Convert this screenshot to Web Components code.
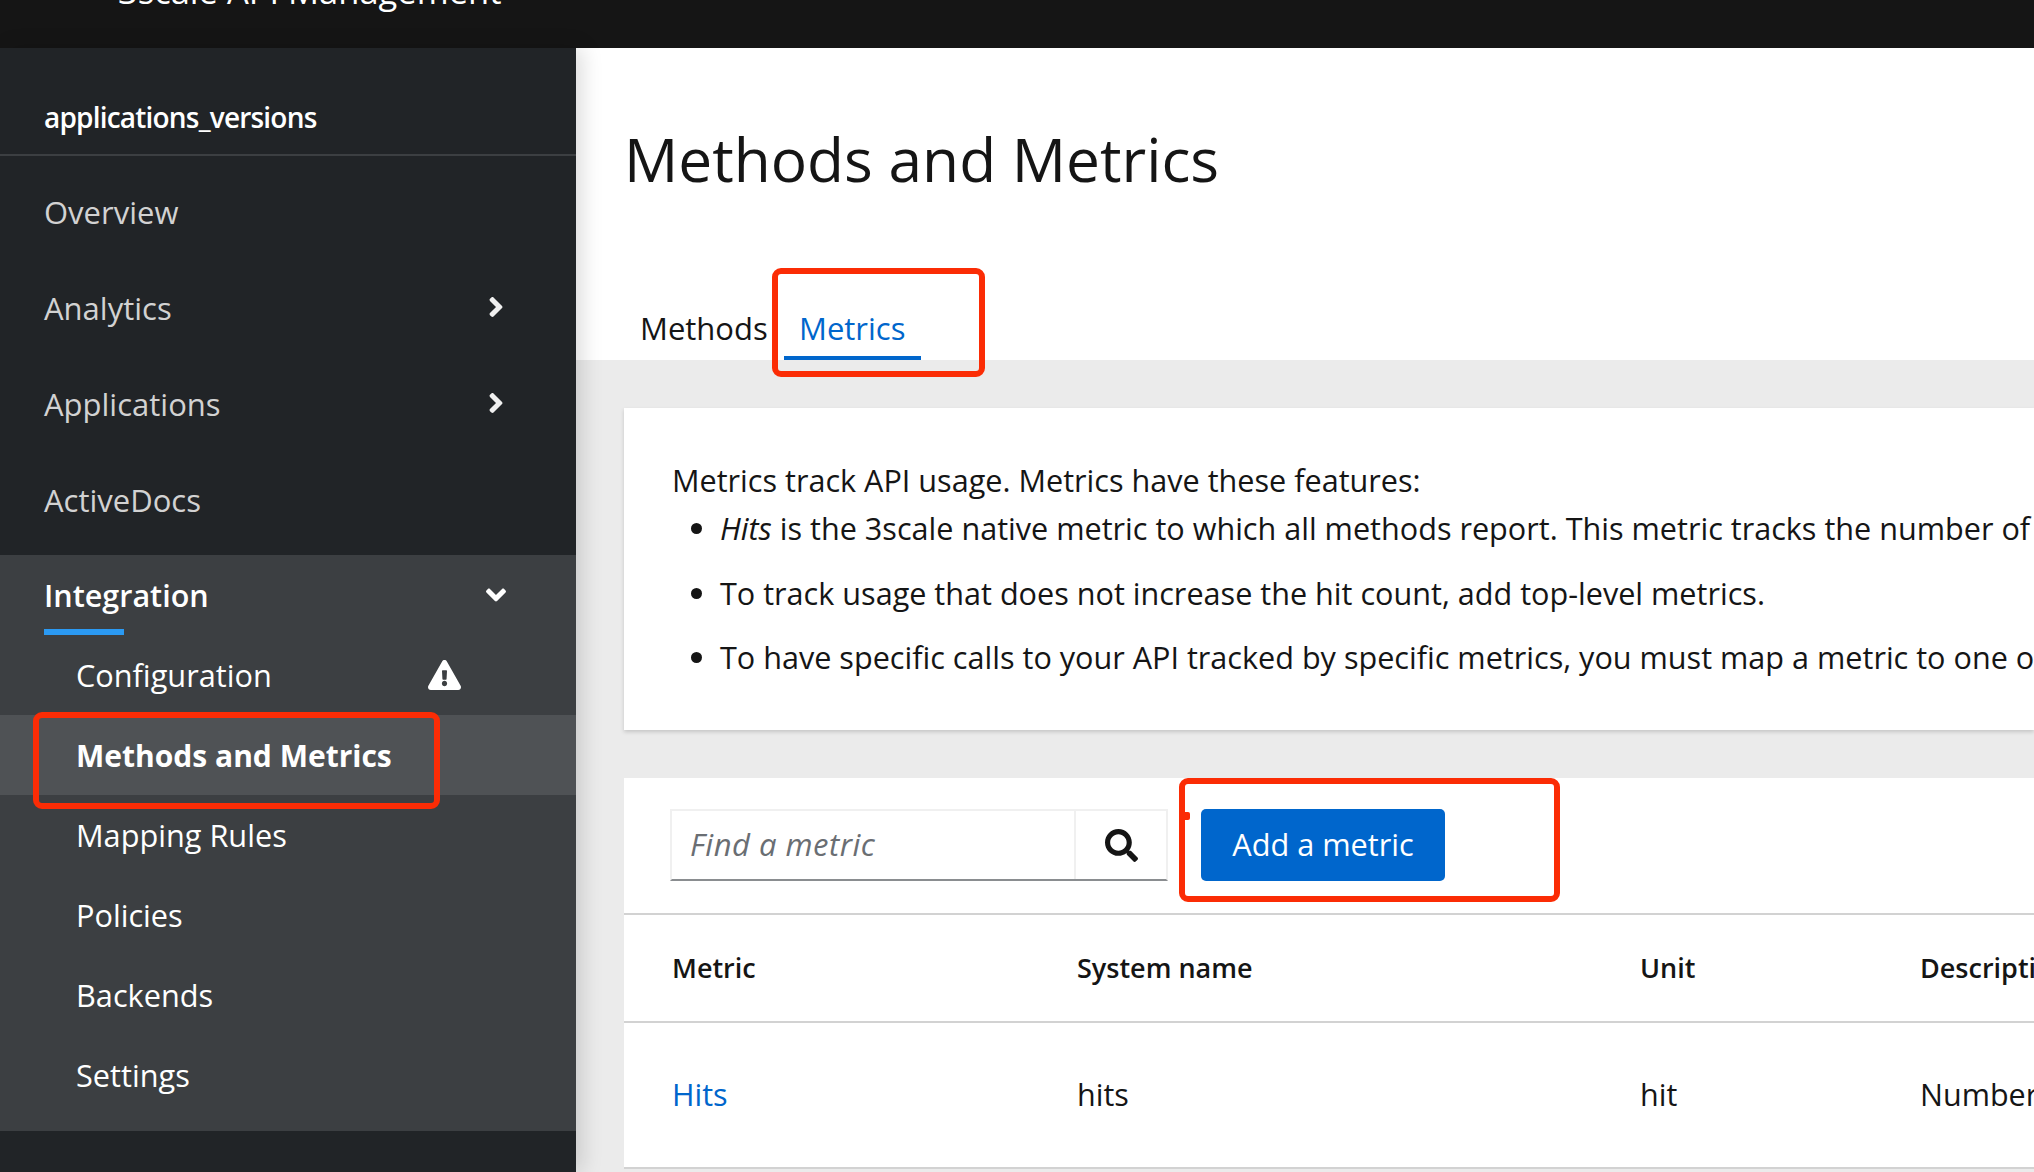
<!DOCTYPE html>
<html>
<head>
<meta charset="utf-8">
<title>Methods and Metrics</title>
<style>
  html, body { margin: 0; height: 100%; overflow: hidden; background: #ebebeb; }
  body { font-family: "Open Sans", "Liberation Sans", sans-serif; color: #151515; }
  info-card li { margin-bottom: 16.5px; }
</style>
</head>
<body>
<app-shell>
  <side-nav slot="nav" heading="applications_versions">
    <nav-item label="Overview"></nav-item>
    <nav-item label="Analytics" arrow="right"></nav-item>
    <nav-item label="Applications" arrow="right"></nav-item>
    <nav-item label="ActiveDocs"></nav-item>
    <nav-group label="Integration">
      <nav-sub label="Configuration" warn></nav-sub>
      <nav-sub label="Methods and Metrics" current></nav-sub>
      <nav-sub label="Mapping Rules"></nav-sub>
      <nav-sub label="Policies"></nav-sub>
      <nav-sub label="Backends"></nav-sub>
      <nav-sub label="Settings"></nav-sub>
    </nav-group>
  </side-nav>
  <page-head heading="Methods and Metrics"></page-head>
  <info-card>
    <p>Metrics track API usage. Metrics have these features:</p>
    <ul>
      <li><em>Hits</em> is the 3scale native metric to which all methods report. This metric tracks the number of calls</li>
      <li>To track usage that does not increase the hit count, add top-level metrics.</li>
      <li>To have specific calls to your API tracked by specific metrics, you must map a metric to one or more</li>
    </ul>
  </info-card>
  <metric-table></metric-table>
</app-shell>
<red-box style="left:772px;top:268px;width:213px;height:109px"></red-box>
<red-box style="left:33px;top:712px;width:407px;height:97px"></red-box>
<red-box style="left:1179px;top:778px;width:381px;height:124px" dot></red-box>

<script>
const ICONS = {
    right: '<svg viewBox="0 0 256 512" width="16" height="32" fill="currentColor"><path d="M224.3 273l-136 136c-9.4 9.4-24.6 9.4-33.9 0l-22.6-22.6c-9.4-9.4-9.4-24.6 0-33.9l96.4-96.4-96.4-96.4c-9.4-9.4-9.4-24.6 0-33.9L54.3 103c9.4-9.4 24.6-9.4 33.9 0l136 136c9.5 9.4 9.5 24.6.1 34z"/></svg>',
    down: '<svg viewBox="0 0 320 512" width="20" height="32" fill="currentColor"><path d="M143 352.3L7 216.3c-9.4-9.4-9.4-24.6 0-33.9l22.6-22.6c9.4-9.4 24.6-9.4 33.9 0l96.4 96.4 96.4-96.4c9.4-9.4 24.6-9.4 33.9 0l22.6 22.6c9.4 9.4 9.4 24.6 0 33.9l-136 136c-9.2 9.4-24.4 9.4-33.8 0z"/></svg>',
    warn: '<svg viewBox="0 0 576 512" width="33" height="30" preserveAspectRatio="none" fill="currentColor"><path d="M569.517 440.013C587.975 472.007 564.806 512 527.94 512H48.054c-36.937 0-59.999-40.055-41.577-71.987L246.423 24.035c18.467-32.009 64.72-31.951 83.154 0l239.94 416.978zM288 354c-25.405 0-46 20.595-46 46s20.595 46 46 46 46-20.595 46-46-20.595-46-46-46zm-43.673-165.346l7.418 136c.347 6.364 5.609 11.346 11.982 11.346h48.546c6.373 0 11.635-4.982 11.982-11.346l7.418-136c.375-6.874-5.098-12.654-11.982-12.654h-63.383c-6.884 0-12.356 5.78-11.981 12.654z"/></svg>',
    search: '<svg viewBox="0 0 512 512" width="33" height="33" fill="currentColor"><path d="M505 442.7L405.3 343c-4.5-4.5-10.6-7-17-7H372c27.6-35.3 44-79.7 44-128C416 93.1 322.9 0 208 0S0 93.1 0 208s93.1 208 208 208c48.3 0 92.7-16.4 128-44v16.3c0 6.4 2.5 12.5 7 17l99.7 99.7c9.4 9.4 24.6 9.4 33.9 0l28.3-28.3c9.4-9.4 9.4-24.6.1-34zM208 336c-70.7 0-128-57.2-128-128 0-70.7 57.2-128 128-128 70.7 0 128 57.2 128 128 0 70.7-57.2 128-128 128z"/></svg>'
};

class Base extends HTMLElement {
    constructor() {
        super();
        this.attachShadow({ mode: 'open' });
    }
    render(html) {
        const template = document.createElement('template');
        template.innerHTML = html;
        this.shadowRoot.appendChild(template.content.cloneNode(true));
    }
    attr(name) {
        return this.getAttribute(name) || '';
    }
}

class AppShell extends Base {
    connectedCallback() {
        this.render(`<style>
            :host { display: flex; flex-direction: column; width: 2034px; height: 1172px; overflow: hidden; }
            header { flex: none; height: 48px; background: #151515; color: #fff; overflow: hidden; padding-left: 118px; }
            header span { display: block; margin-top: -29px; font-size: 34.5px; line-height: 40px; white-space: nowrap; }
            .body { flex: 1; display: flex; min-height: 0; }
            main { flex: 1; min-width: 0; background: #ebebeb; overflow: hidden; }
        </style>
        <header><span>3scale API Management</span></header>
        <div class="body"><slot name="nav"></slot><main><slot></slot></main></div>`);
    }
}

class SideNav extends Base {
    connectedCallback() {
        this.render(`<style>
            :host { display: block; flex: none; width: 576px; background: #212427; color: #d2d2d2; position: relative; z-index: 1; box-shadow: 6px 0 20px rgba(0,0,0,.14); }
            h2 { margin: 0; height: 108px; box-sizing: border-box; padding: 50px 0 0 44px; font-size: 28px; line-height: 38px; font-weight: 600; color: #fff; letter-spacing: -.8px; border-bottom: 2px solid #3c3f42; }
            .list { padding-top: 8px; }
        </style>
        <h2>${this.attr('heading')}</h2>
        <div class="list"><slot></slot></div>`);
    }
}

class NavItem extends Base {
    connectedCallback() {
        const arrow = this.attr('arrow');
        this.render(`<style>
            :host { display: flex; align-items: center; justify-content: space-between; height: 96px; padding: 0 72px 0 44px; font-size: 31px; color: #d2d2d2; }
            svg { display: block; color: #f0f0f0; margin-top: -2px; }
        </style>
        <span>${this.attr('label')}</span>${arrow ? ICONS[arrow] : ''}`);
    }
}

class NavGroup extends Base {
    connectedCallback() {
        this.render(`<style>
            :host { display: block; margin-top: 7px; padding-bottom: 16px; background: #3c3f42; color: #fff; }
            .top { position: relative; display: flex; align-items: center; justify-content: space-between; height: 80px; padding: 0 70px 0 44px; font-size: 30.5px; font-weight: 600; }
            .top::after { content: ""; position: absolute; left: 44px; bottom: 0; width: 80px; height: 6px; background: #2b9af3; }
            svg { display: block; }
        </style>
        <div class="top"><span>${this.attr('label')}</span>${ICONS.down}</div>
        <slot></slot>`);
    }
}

class NavSub extends Base {
    connectedCallback() {
        this.render(`<style>
            :host { display: flex; align-items: center; height: 80px; padding-left: 76px; font-size: 30.7px; color: #fff; }
            :host([current]) { background: #4f5255; font-weight: 700; font-size: 30px; }
            svg { display: block; margin-left: 156px; }
        </style>
        <span>${this.attr('label')}</span>${this.hasAttribute('warn') ? ICONS.warn : ''}`);
    }
}

class PageHead extends Base {
    connectedCallback() {
        this.render(`<style>
            :host { display: block; height: 312px; box-sizing: border-box; background: #fff; padding: 69px 0 0 48px; position: relative; }
            h1 { margin: 0; font-size: 60.4px; line-height: 84px; font-weight: 400; }
            .tabs { position: absolute; left: 48px; bottom: 0; display: flex; font-size: 31px; line-height: 64px; }
            .tab { padding: 0 16px; height: 64px; box-sizing: border-box; }
            .tab.on { color: #06c; border-bottom: 4px solid #06c; width: 137px; padding-left: 15px; }
            .tab.first { width: 160px; }
        </style>
        <h1>${this.attr('heading')}</h1>
        <div class="tabs"><div class="tab first">Methods</div><div class="tab on">Metrics</div></div>`);
    }
}

class InfoCard extends Base {
    connectedCallback() {
        this.render(`<style>
            :host { display: block; margin: 48px 0 48px 48px; height: 322px; box-sizing: border-box; padding: 48px 0 0 48px; background: #fff; box-shadow: 0 2px 4px rgba(0,0,0,.16); font-size: 30.6px; line-height: 48px; white-space: nowrap; overflow: hidden; }
            ::slotted(p) { margin: 0; }
            ::slotted(ul) { margin: 0; padding: 0 0 0 48px; }
        </style><slot></slot>`);
    }
}

class MetricTable extends Base {
    connectedCallback() {
        this.render(`<style>
            :host { display: block; margin-left: 48px; background: #fff; font-size: 30.5px; white-space: nowrap; overflow: hidden; }
            .bar { display: flex; height: 137px; box-sizing: border-box; padding: 31px 0 0 46px; border-bottom: 2px solid #d2d2d2; }
            .find { display: flex; height: 72px; box-sizing: border-box; border: 2px solid #f0f0f0; border-bottom-color: #8a8d90; }
            .text { width: 404px; box-sizing: border-box; padding-left: 18px; line-height: 66px; font-size: 31px; letter-spacing: .5px; font-style: italic; color: #6a6e73; border-right: 2px solid #f0f0f0; }
            .go { width: 90px; display: flex; align-items: center; justify-content: center; color: #151515; }
            .add { margin-left: 33px; width: 244px; height: 72px; line-height: 70px; text-align: center; color: #fff; background: #06c; border-radius: 5px; font-size: 30.7px; }
            .row { display: grid; grid-template-columns: 405px 563px 280px 1fr; align-items: center; padding-left: 48px; border-bottom: 2px solid #d2d2d2; }
            .head { height: 108px; box-sizing: border-box; font-weight: 600; font-size: 27px; padding-bottom: 2px; }
            .data { height: 146px; box-sizing: border-box; padding-bottom: 2px; }
            a { color: #06c; text-decoration: none; }
        </style>
        <div class="bar">
            <div class="find"><div class="text">Find a metric</div><div class="go">${ICONS.search}</div></div>
            <div class="add">Add a metric</div>
        </div>
        <div class="row head"><span>Metric</span><span>System name</span><span>Unit</span><span>Description</span></div>
        <div class="row data"><a>Hits</a><span>hits</span><span>hit</span><span>Number of hits</span></div>`);
    }
}

// red annotation rectangles drawn over the screenshot
class RedBox extends Base {
    connectedCallback() {
        this.render(`<style>
            :host { position: absolute; z-index: 5; box-sizing: border-box; border: 6px solid #fb2c05; border-radius: 9px; }
            i { position: absolute; left: 0; top: 28px; width: 5px; height: 8px; background: #fb2c05; border-radius: 0 2px 2px 0; }
        </style>${this.hasAttribute('dot') ? '<i></i>' : ''}`);
    }
}

window.customElements.define('app-shell', AppShell);
window.customElements.define('side-nav', SideNav);
window.customElements.define('nav-item', NavItem);
window.customElements.define('nav-group', NavGroup);
window.customElements.define('nav-sub', NavSub);
window.customElements.define('page-head', PageHead);
window.customElements.define('info-card', InfoCard);
window.customElements.define('metric-table', MetricTable);
window.customElements.define('red-box', RedBox);
</script>
</body>
</html>
